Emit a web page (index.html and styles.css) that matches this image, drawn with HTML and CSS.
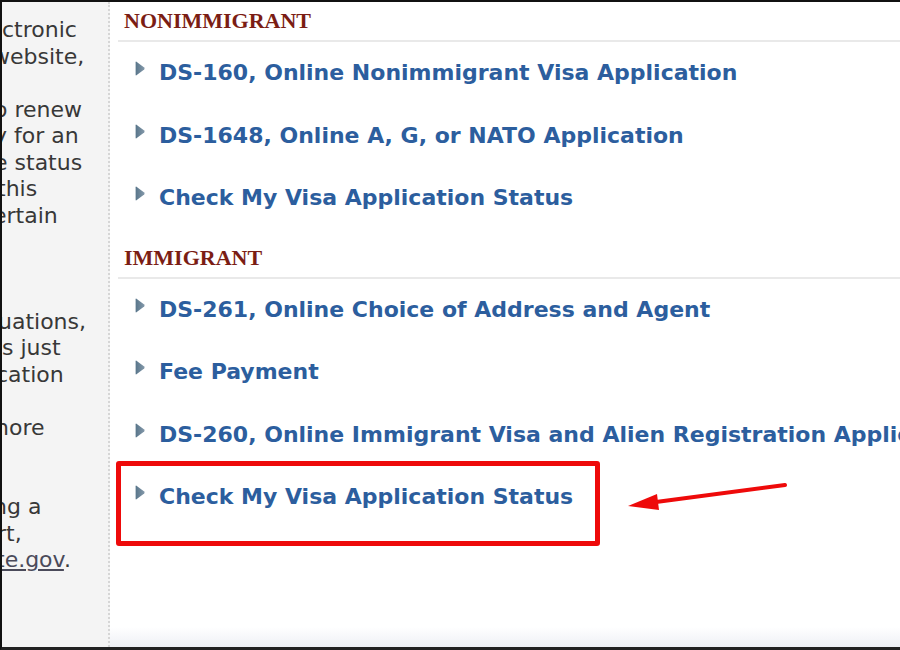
FILE: index.html
```
<html lang="en">
<head>
    <meta charset="UTF-8">
    <meta name="viewport" content="width=device-width, initial-scale=1.0">
    <title>Online Applications</title>
    <link rel="stylesheet" href="styles.css">
</head>
<body>
    <svg width="0" height="0" class="defs">
        <defs>
            <linearGradient id="tri" x1="0" y1="0" x2="1" y2="0">
                <stop offset="0" stop-color="#58758a"/>
                <stop offset="1" stop-color="#8499aa"/>
            </linearGradient>
            <symbol id="bullet" viewBox="0 0 10 15">
                <path d="M0.6 1.4 Q0.6 0 1.8 0.9 L9.2 6.5 Q10 7.5 9.2 8.5 L1.8 14.1 Q0.6 15 0.6 13.6 Z" fill="url(#tri)"/>
            </symbol>
        </defs>
    </svg>
    <div class="page">
        <div class="side">
            <div class="line">ctronic</div>
            <div class="line in10">website,</div>
            <div class="line"></div>
            <div class="line"><span class="cut">o</span> renew</div>
            <div class="line"><span class="cut">y</span> for an</div>
            <div class="line"><span class="cut">e</span> status</div>
            <div class="line in5">this</div>
            <div class="line in9">ertain</div>
            <div class="line"></div>
            <div class="line"></div>
            <div class="line"></div>
            <div class="line in4">uations,</div>
            <div class="line">s just</div>
            <div class="line in6">cation</div>
            <div class="line"></div>
            <div class="line in7">nore</div>
            <div class="line"></div>
            <div class="line"></div>
            <div class="line in9">ng a</div>
            <div class="line in5">rt,</div>
            <div class="line in6"><a href="#" class="side-link">te.gov</a>.</div>
        </div>

        <div class="main">
            <h3 class="group-title first">NONIMMIGRANT</h3>
            <ul class="links">
                <li><svg class="arrow"><use href="#bullet"/></svg><a href="#">DS-160, Online Nonimmigrant Visa Application</a></li>
                <li><svg class="arrow"><use href="#bullet"/></svg><a href="#">DS-1648, Online A, G, or NATO Application</a></li>
                <li><svg class="arrow"><use href="#bullet"/></svg><a href="#">Check My Visa Application Status</a></li>
            </ul>

            <h3 class="group-title">IMMIGRANT</h3>
            <ul class="links">
                <li><svg class="arrow"><use href="#bullet"/></svg><a href="#">DS-261, Online Choice of Address and Agent</a></li>
                <li><svg class="arrow"><use href="#bullet"/></svg><a href="#">Fee Payment</a></li>
                <li><svg class="arrow"><use href="#bullet"/></svg><a href="#">DS-260, Online Immigrant Visa and Alien Registration Application</a></li>
                <li><svg class="arrow"><use href="#bullet"/></svg><a href="#">Check My Visa Application Status</a></li>
            </ul>
        </div>

        <!-- annotation drawn over the screenshot -->
        <div class="mark-box"></div>
        <svg class="mark-arrow" width="175" height="45" viewBox="0 0 175 45">
            <line x1="165" y1="10" x2="36" y2="27" stroke="#ee0a0a" stroke-width="4" stroke-linecap="round"/>
            <polygon points="8,31 39,35 37,19" fill="#ee0a0a"/>
        </svg>
    </div>
</body>
</html>
```

FILE: styles.css
```
body {
  margin: 0;
  background: #fff;
}

.defs {
  position: absolute;
}

.page {
  position: relative;
  width: 900px;
  height: 650px;
  box-sizing: border-box;
  border-top: 2px solid #111;
  border-left: 2px solid #111;
  border-bottom: 3px solid #222;
  display: flex;
  overflow: hidden;
  background: linear-gradient(to bottom, #fff 0, #fff 625px, #eef0f5 100%);
}

.side {
  width: 106px;
  flex-shrink: 0;
  background: #f4f4f4;
  border-right: 2px dotted #d6d6d6;
  padding-top: 15px;
  overflow: hidden;
  font-family: "DejaVu Sans", Verdana, sans-serif;
  font-size: 22px;
  line-height: 26.5px;
  color: #383838;
}

.line {
  height: 26.5px;
  white-space: pre;
}

/* the paragraph is cut by the edge of the capture */
.in4 { text-indent: -4px; }
.in5 { text-indent: -5px; }
.in6 { text-indent: -6px; }
.in7 { text-indent: -7px; }
.in9 { text-indent: -9px; }
.in10 { text-indent: -10px; }

.cut {
  display: inline-block;
  margin-left: -8px;
}

.side-link {
  color: #4a4a5a;
}

.main {
  flex: 1;
  min-width: 0;
  padding-left: 8px;
  overflow: hidden;
}

.group-title {
  margin: 15px 0 0 0;
  padding: 0 0 6px 6px;
  border-bottom: 2px solid #e9e9e9;
  font-family: "Liberation Serif", "Times New Roman", serif;
  font-size: 22px;
  line-height: 26px;
  font-weight: bold;
  color: #7b1d14;
}

.group-title.first {
  margin-top: 6px;
}

.links {
  list-style: none;
  margin: 0;
  padding: 0;
}

.links li {
  display: flex;
  align-items: center;
  padding: 18px 0;
  line-height: 26.5px;
  white-space: nowrap;
}

.links a {
  font-family: "DejaVu Sans", Verdana, sans-serif;
  font-weight: bold;
  font-size: 22px;
  color: #2c5e9e;
  text-decoration: none;
}

.arrow {
  flex-shrink: 0;
  width: 10px;
  height: 15px;
  margin: -9px 14px 0 17px;
}

.mark-box {
  position: absolute;
  left: 114px;
  top: 459px;
  width: 484px;
  height: 85px;
  box-sizing: border-box;
  border: 5px solid #ee0a0a;
  border-radius: 3px;
}

.mark-arrow {
  position: absolute;
  left: 618px;
  top: 473px;
}
```
